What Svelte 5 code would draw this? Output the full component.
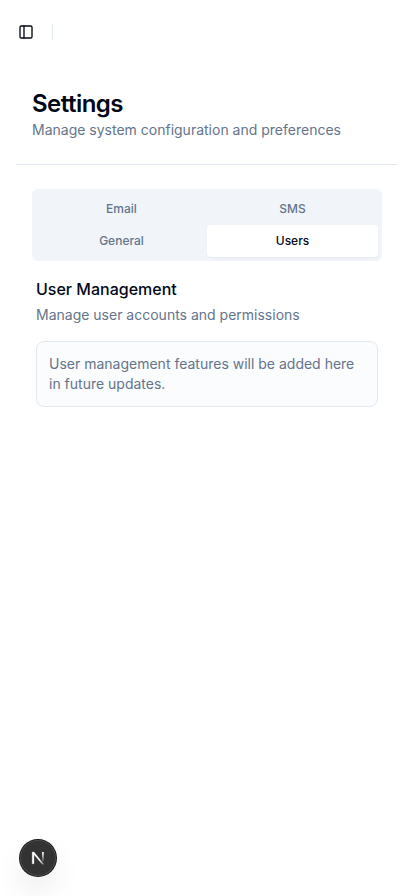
<script>
  const tabs = ['Email', 'SMS', 'General', 'Users'];
  let active = $state('Users');
</script>

<div class="page">
  <header>
    <button class="trigger" aria-label="Toggle Sidebar">
      <svg width="16" height="16" viewBox="0 0 24 24" fill="none" stroke="currentColor" stroke-width="2" stroke-linecap="round" stroke-linejoin="round">
        <rect width="18" height="18" x="3" y="3" rx="2" /><path d="M9 3v18" />
      </svg>
    </button>
    <span class="sep"></span>
  </header>
  <main>
    <section class="title">
      <h1>Settings</h1>
      <p>Manage system configuration and preferences</p>
    </section>
    <div class="tabs">
      {#each tabs as tab}
        <button class:active={active === tab} onclick={() => (active = tab)}>{tab}</button>
      {/each}
    </div>
    <section class="panel">
      <h2>User Management</h2>
      <p>Manage user accounts and permissions</p>
      <div class="note">User management features will be added here in future updates.</div>
    </section>
  </main>
  <div class="badge">
    <svg width="36" height="36" viewBox="0 0 36 36" fill="none">
      <defs>
        <linearGradient id="diag" x1="19" y1="20" x2="24" y2="25.5" gradientUnits="userSpaceOnUse"><stop stop-color="#fff" /><stop offset="1" stop-color="#fff" stop-opacity=".25" /></linearGradient>
        <linearGradient id="stem" x1="23" y1="12" x2="23" y2="22.5" gradientUnits="userSpaceOnUse"><stop stop-color="#fff" /><stop offset="1" stop-color="#fff" stop-opacity="0" /></linearGradient>
      </defs>
      <path d="M12.2 12H14L23.8 24.3L22.2 24.3L14 14.6V23.8H12.2Z" fill="url(#diag)" stroke="url(#diag)" stroke-width=".3" />
      <path d="M22.9 12v10.5" stroke="url(#stem)" stroke-width="1.8" />
    </svg>
  </div>
</div>

<style>
  :global(body) { background: #fff; }
  .page { min-height: 896px; position: relative; overflow: hidden; font-family: Inter, sans-serif; color: #020817; box-sizing: border-box; }
  h1, h2, p { margin: 0; }
  button { border: 0; padding: 0; background: none; font: inherit; color: inherit; }
  header { height: 64px; display: flex; align-items: center; padding: 0 12px; }
  .trigger { width: 28px; height: 28px; display: flex; align-items: center; justify-content: center; }
  .sep { width: 1px; height: 16px; margin-left: 12px; background: #e2e8f0; }
  main { padding: 0 16px; }
  .title { padding: 24px 16px; border-bottom: 1px solid #e2e8f0; }
  h1 { font-size: 24px; line-height: 32px; font-weight: 600; letter-spacing: -0.52px; }
  p { font-size: 14px; line-height: 20px; color: #64748b; }
  .tabs { margin: 24px 16px 0; padding: 4px; display: grid; grid-template-columns: 1fr 1fr; background: #f1f5f9; border-radius: 6px; }
  .tabs button { height: 32px; font-size: 12px; line-height: 16px; font-weight: 500; color: #64748b; border-radius: 4px; }
  .tabs .active { background: #fff; color: #020817; box-shadow: 0 1px 2px rgba(0, 0, 0, .05); }
  .panel { margin: 16px 20px 0; }
  h2 { font-size: 16px; line-height: 24px; font-weight: 500; }
  .panel p { margin-top: 4px; }
  .note { margin-top: 16px; padding: 12px; border: 1px solid #e2e8f0; border-radius: 8px; background: #fbfcfe; font-size: 14px; line-height: 20px; color: #64748b; }
  .badge { position: absolute; left: 20px; bottom: 20px; width: 36px; height: 36px; border-radius: 50%; background: #333; box-shadow: 0 0 0 1px #171717, inset 0 0 0 1px #484848, 0 16px 32px -8px rgba(0, 0, 0, .24); }
  .badge svg { display: block; }
</style>
